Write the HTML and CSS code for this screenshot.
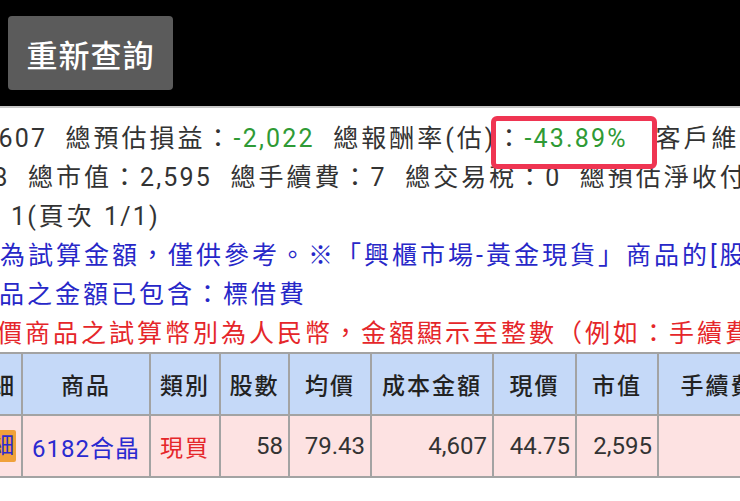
FILE: index.html
```html
<!DOCTYPE html>
<html lang="zh-Hant">
<head>
<meta charset="utf-8">
<link rel="stylesheet" href="styles.css">
</head>
<body>
<div class="topbar">
  <button class="btn">重新查詢</button>
</div>
<div class="content">
  <div class="summary">
    <div class="line l1">總成本：<span class="n">4,607</span>&nbsp;&nbsp;總預估損益：<span class="n green">-2,022</span>&nbsp;&nbsp;總報酬率(估)：<span class="n green">-43.89%</span>&nbsp;&nbsp;&nbsp;客戶維持率：0</div>
    <div class="line l2">總股數：<span class="n">58</span>&nbsp;&nbsp;總市值：<span class="n">2,595</span>&nbsp;&nbsp;總手續費：<span class="n">7</span>&nbsp;&nbsp;總交易稅：<span class="n">0</span>&nbsp;&nbsp;總預估淨收付：-2,029</div>
    <div class="line l3">資料筆數：<span class="n">1</span>(頁次 <span class="n">1/1</span>)</div>
    <div class="line l4 blue">※損益金額為試算金額，僅供參考。※「興櫃市場-黃金現貨」商品的[股數]單位為公克</div>
    <div class="line l5 blue">※借券賣出商品之金額已包含：標借費</div>
    <div class="line l6 red">※外幣計價商品之試算幣別為人民幣，金額顯示至整數（例如：手續費、交易稅）</div>
  </div>
  <div class="highlight"></div>
  <table class="grid">
    <colgroup>
      <col class="c1"><col class="c2"><col class="c3"><col class="c4"><col class="c5"><col class="c6"><col class="c7"><col class="c8"><col class="c9">
    </colgroup>
    <thead>
      <tr><th class="first">明細</th><th>商品</th><th>類別</th><th>股數</th><th>均價</th><th>成本金額</th><th>現價</th><th>市值</th><th>手續費</th></tr>
    </thead>
    <tbody>
      <tr>
        <td class="first"><span class="badge">明細</span></td>
        <td class="name">6182合晶</td>
        <td class="type">現買</td>
        <td class="num">58</td>
        <td class="num">79.43</td>
        <td class="num">4,607</td>
        <td class="num">44.75</td>
        <td class="num">2,595</td>
        <td class="num">7</td>
      </tr>
    </tbody>
  </table>
</div>
</body>
</html>
```
FILE: styles.css
```css
html, body {
  margin: 0;
  padding: 0;
}
body {
  width: 740px;
  height: 501px;
  overflow: hidden;
  background: #fff;
  font-family: Roboto, "Noto Sans CJK TC", sans-serif;
  color: #333;
}
.topbar {
  background: #000;
  height: 108px;
  padding: 16px 0 0 8px;
  box-sizing: border-box;
  border-bottom: 2px solid #c9c9c9;
}
.btn {
  width: 165px;
  height: 74px;
  background: #5b5b5b;
  border: none;
  border-radius: 4px;
  color: #fff;
  font-family: Roboto, "Noto Sans CJK TC", sans-serif;
  font-size: 31px;
  font-weight: 500;
  letter-spacing: 1px;
  padding: 0;
}
.content {
  position: relative;
}
.summary {
  padding-top: 11px;
}
.line {
  white-space: nowrap;
  font-size: 25px;
  letter-spacing: 3px;
  line-height: 39px;
}
.line .n { letter-spacing: 2.2px; }
.l1 { margin-left: -137px; }
.l2 { margin-left: -135px; }
.l3 { margin-left: -129px; }
.l4 { margin-left: -140px; }
.l5 { margin-left: -169px; }
.l6 { margin-left: -115px; }
.green { color: #2f9a35; }
.blue { color: #2727c8; }
.red { color: #e5262a; }
.highlight {
  position: absolute;
  left: 491px;
  top: 8px;
  width: 166px;
  height: 53px;
  box-sizing: border-box;
  border: 5px solid #ef3552;
  border-radius: 6px;
}
.grid {
  margin-top: -1px;
  margin-left: -39px;
  border-collapse: collapse;
  table-layout: fixed;
  width: 816px;
}
.c1 { width: 60px; }
.c2 { width: 128px; }
.c3 { width: 70px; }
.c4 { width: 69px; }
.c5 { width: 82px; }
.c6 { width: 122px; }
.c7 { width: 83px; }
.c8 { width: 82px; }
.c9 { width: 120px; }
.grid th, .grid td {
  border: 2px solid #a3a3a3;
  height: 62px;
  padding: 0 5px;
  white-space: nowrap;
  overflow: hidden;
  font-size: 23px;
  box-sizing: border-box;
}
.grid th {
  background: #c5d9f8;
  font-weight: 500;
  color: #222;
  letter-spacing: 2px;
}
.grid td {
  background: #fde2e2;
}
.grid th.first {
  text-align: right;
  padding-right: 9px;
  letter-spacing: 0;
}
.grid td.name {
  color: #2a2ad0;
  text-align: center;
  font-size: 24px;
  letter-spacing: 1px;
}
.grid td.type {
  color: #e5262a;
  text-align: center;
  letter-spacing: 2px;
}
.grid td.num {
  text-align: right;
  font-size: 24px;
}
.grid td.first {
  text-align: right;
  padding-right: 9px;
}
.badge {
  display: inline-block;
  background: #f0a13a;
  color: #2a2ad0;
  padding: 2px 2px;
  border-radius: 2px;
  font-size: 22px;
  line-height: 28px;
}
```
